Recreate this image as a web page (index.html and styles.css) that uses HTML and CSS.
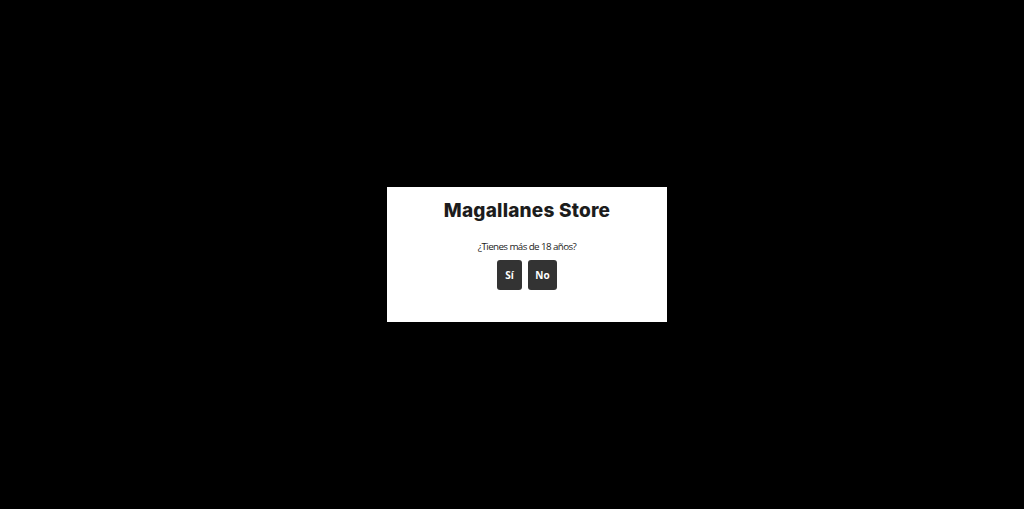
FILE: index.html
```html
<!DOCTYPE html>
<html lang="es">
<head>
<meta charset="utf-8">
<link rel="stylesheet" href="styles.css">
</head>
<body>
<div class="overlay">
  <div class="modal">
    <h1 class="title">Magallanes Store</h1>
    <p class="question">¿Tienes más de 18 años?</p>
    <div class="actions">
      <button class="btn btn-yes">Sí</button>
      <button class="btn btn-no">No</button>
    </div>
  </div>
</div>
</body>
</html>
```

FILE: styles.css
```css
html, body {
  margin: 0;
  padding: 0;
  background: #000;
  height: 100%;
}
.overlay {
  height: 509px;
  display: flex;
  align-items: flex-start;
  justify-content: center;
}
.modal {
  margin-top: 187px;
  margin-left: 30px;
  width: 280px;
  height: 135px;
  box-sizing: border-box;
  background: #fff;
  text-align: center;
  padding-top: 12px;
}
.title {
  margin: 0;
  font-family: "Inter", "Liberation Sans", sans-serif;
  font-weight: 800;
  font-size: 19px;
  line-height: 24px;
  color: #1c1c1c;
  letter-spacing: 0.2px;
}
.question {
  margin: 17px 0 0;
  font-family: "Open Sans", "Liberation Sans", sans-serif;
  font-size: 9.8px;
  line-height: 14px;
  color: #222;
  letter-spacing: -0.6px;
}
.actions {
  margin-top: 6px;
  display: flex;
  justify-content: center;
  gap: 6px;
}
.btn {
  height: 30px;
  border: none;
  border-radius: 3px;
  background: #333;
  color: #fff;
  font-family: "Open Sans", "Liberation Sans", sans-serif;
  font-weight: 700;
  font-size: 10px;
  padding: 0;
  cursor: pointer;
}
.btn-yes { width: 25px; }
.btn-no { width: 29px; }
```
